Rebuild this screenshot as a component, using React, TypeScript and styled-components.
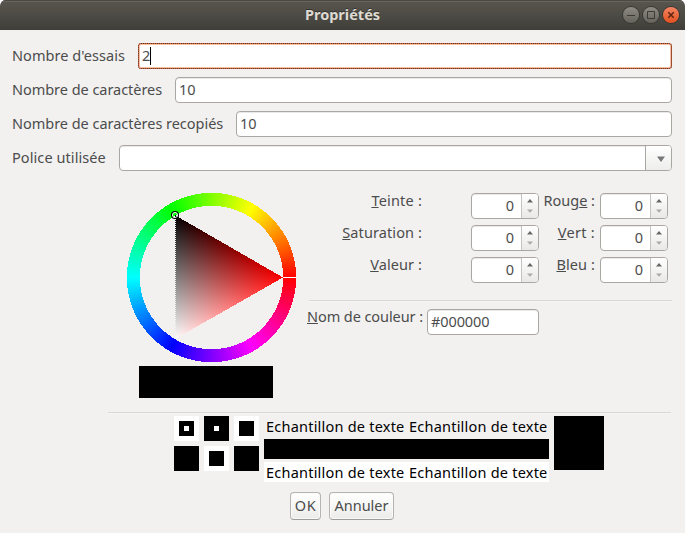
import React from 'react';
import styled, { createGlobalStyle, css } from 'styled-components';

const ink = '#4c4c4c';
const surface = '#f2f1f0';
const line = '#aaa7a3';

const GlobalStyle = createGlobalStyle`
  * { box-sizing: border-box; }
  body {
    margin: 0;
    background: #fff;
    color: ${ink};
    font-family: 'Noto Sans', 'Open Sans', sans-serif;
    font-size: 14.5px;
    line-height: 20px;
  }
`;

const Window = styled.div`
  width: 685px;
  height: 533px;
  display: flex;
  flex-direction: column;
  background: ${surface};
  border-radius: 6px 6px 0 0;
  overflow: hidden;
  white-space: nowrap;
`;

const TitleBar = styled.header`
  height: 30px;
  flex: none;
  display: grid;
  grid-template-columns: 1fr auto 1fr;
  align-items: center;
  padding: 0 6px;
  background: linear-gradient(#59564e, #4d4b45 50%, #3f3e39);
  box-shadow: inset 0 1px #4b4943, inset 0 2px #66635a;
`;

const Title = styled.h1`
  grid-column: 2;
  margin: 0;
  padding-bottom: 2px;
  font-size: 14.5px;
  font-weight: 700;
  line-height: 20px;
  color: #dfdbd2;
  text-shadow: 0 -1px #33322e;
`;

const WindowButtons = styled.div`
  display: flex;
  justify-content: flex-end;
  gap: 4px;
`;

const WindowButton = styled.button<{ $close?: boolean }>`
  width: 16px;
  height: 16px;
  padding: 0;
  border: 0;
  border-radius: 50%;
  display: flex;
  background: ${(p) => (p.$close ? 'linear-gradient(#f58562, #e2501f)' : 'linear-gradient(#8d8b83, #64625b)')};
  box-shadow: 0 0 0 1px #383733;
`;

const Form = styled.form`
  display: flex;
  flex-direction: column;
  gap: 8px;
  padding: 13px 13px 0 12px;
`;

const Field = styled.div<{ $label: number }>`
  display: grid;
  grid-template-columns: ${(p) => p.$label}px 1fr;
  align-items: center;
  height: 26px;
`;

const Text = styled.span<{ $track?: number }>`
  padding-bottom: 2px;
  letter-spacing: ${(p) => p.$track ?? 0}px;
`;

const Entry = styled.div<{ $focused?: boolean; $width?: number }>`
  display: flex;
  align-items: center;
  width: ${(p) => (p.$width ? `${p.$width}px` : 'auto')};
  height: 26px;
  padding: 0 3px;
  background: #fff;
  border: 1px solid ${line};
  border-radius: 4px;
  box-shadow: inset 0 1px #ebe9e7;
  overflow: hidden;
  ${(p) =>
    p.$focused &&
    css`
      border-color: #e9602f;
      border-radius: 3px;
      outline: 1px dotted #4a3a34;
      outline-offset: -1px;
      box-shadow: inset 0 0 0 1px #f8c0a4;
    `}
`;

const Caret = styled.span`
  width: 1px;
  height: 18px;
  background: #000;
`;

const Combo = styled(Entry)`
  padding: 0;
  justify-content: flex-end;
`;

const ComboButton = styled.button`
  width: 26px;
  height: 24px;
  padding: 2px 0 0 4px;
  border: 0;
  border-left: 1px solid ${line};
  display: flex;
  align-items: center;
  justify-content: center;
  background: linear-gradient(#fff, #ededec);
`;

const Picker = styled.section`
  display: flex;
  gap: 11px;
  height: 241px;
  padding: 22px 13px 0 127px;
`;

const WheelColumn = styled.div`
  display: flex;
  flex-direction: column;
  gap: 4px;
`;

const Wheel = styled.div`
  position: relative;
  width: 169px;
  height: 169px;
`;

const HueRing = styled.div`
  width: 169px;
  height: 169px;
  background: conic-gradient(from 90deg, #f00, #f0f, #00f, #0ff, #0f0, #ff0, #f00);
  mask-image: radial-gradient(circle at center, transparent 71.6px, #000 71.6px, #000 84.6px, transparent 84.6px);
`;

const Triangle = styled.svg`
  position: absolute;
  inset: 0;
  isolation: isolate;

  .screen { mix-blend-mode: screen; }
`;

const CurrentColor = styled.div`
  width: 134px;
  height: 32px;
  margin-left: 12px;
  background: #000;
`;

const Channels = styled.div`
  flex: 1;
`;

const ChannelGrid = styled.div`
  display: grid;
  grid-template-columns: 164px 68px 61px 68px;
  grid-auto-rows: 26px;
  row-gap: 6px;
`;

const ChannelLabel = styled.label<{ $track?: number; $gap?: number }>`
  text-align: right;
  line-height: 15px;
  padding-right: ${(p) => p.$gap ?? 0}px;
  letter-spacing: ${(p) => p.$track ?? 0}px;
`;

const Mnemonic = styled.span`
  text-decoration: underline 1px;
  text-underline-offset: 1px;
  text-decoration-skip-ink: none;
`;

const Spinner = styled(Entry)`
  padding: 0;

  output { flex: 1; padding: 0 7px 2px 0; text-align: right; }
`;

const Stepper = styled.span`
  width: 17px;
  height: 24px;
  display: flex;
  border-left: 1px solid #c5c2bf;
  background: linear-gradient(#fff, #e9e8e7);
`;

const Rule = styled.hr<{ $inset: number }>`
  flex: none;
  height: 1px;
  margin: 0 0 0 ${(p) => p.$inset}px;
  border: 0;
  background: #d9d8d6;
  box-shadow: 0 1px #f6f5f4;
`;

const ChannelRule = styled(Rule)`
  margin-top: 17px;
  margin-bottom: 8px;
`;

const PreviewRule = styled(Rule)`
  margin-right: 14px;
`;

const ColorName = styled.div`
  display: grid;
  grid-template-columns: 115px 112px;
  column-gap: 5px;
`;

const Preview = styled.section`
  display: flex;
  gap: 5px;
  padding: 3px 0 0 174px;
`;

const Tiles = styled.div`
  display: grid;
  grid-template-columns: repeat(3, 25px);
  grid-auto-rows: 25px;
  gap: 5px;
`;

const Square = styled.div<{ $size: number; $dark?: boolean }>`
  width: ${(p) => p.$size}px;
  height: ${(p) => p.$size}px;
  display: grid;
  place-items: center;
  background: ${(p) => (p.$dark ? '#000' : '#fff')};
`;

const Samples = styled.div`
  width: 285px;
  display: grid;
  grid-template-columns: 285px;
  grid-auto-rows: 20px;
  row-gap: 3px;
  color: #000;
`;

const SampleRow = styled.div<{ $fill: string }>`
  display: grid;
  grid-template-columns: 143px 140px;
  padding-left: 2px;
  letter-spacing: 0.22px;
  background: ${(p) => p.$fill};
`;

const Block = styled.div`
  width: 50px;
  height: 54px;
  background: #000;
`;

const Actions = styled.footer`
  display: flex;
  gap: 8px;
  padding: 10px 0 0 290px;
`;

const Button = styled.button<{ $width: number; $track?: number }>`
  width: ${(p) => p.$width}px;
  height: 28px;
  padding: 0 0 2px;
  font: inherit;
  color: ${ink};
  letter-spacing: ${(p) => p.$track ?? 0}px;
  border: 1px solid #b6b3b0;
  border-bottom-color: #9f9c98;
  border-radius: 4px;
  background: linear-gradient(#fff, #f6f6f5 50%, #ebebea);
  box-shadow: inset 0 0 0 1px #fafafa;
`;

function Steps() {
  return (
    <Stepper>
      <svg width="16" height="24" viewBox="0 0 16 24">
        <path d="M5 8.5h6L8 5Z" fill="#666" />
        <path d="M5 15.5h6l-3 3.3Z" fill="#aaa" />
      </svg>
    </Stepper>
  );
}

function Spin() {
  return (
    <Spinner>
      <output>0</output>
      <Steps />
    </Spinner>
  );
}

function ColorWheel() {
  const corners = '156,84.5 48,22.2 48,146';
  return (
    <Wheel>
      <HueRing />
      <Triangle width="169" height="169" viewBox="0 0 169 169">
        <defs>
          <linearGradient id="red" gradientUnits="userSpaceOnUse" x1="48" y1="22.2" x2="102" y2="115.7">
            <stop stopColor="#000" />
            <stop offset="1" stopColor="#f00" />
          </linearGradient>
          <linearGradient id="cyan" gradientUnits="userSpaceOnUse" x1="102" y1="53.3" x2="48" y2="146.8">
            <stop stopColor="#000" />
            <stop offset="1" stopColor="#0ff" />
          </linearGradient>
        </defs>
        <g shapeRendering="crispEdges">
          <polygon points={corners} fill="url(#red)" />
          <polygon points={corners} fill="url(#cyan)" className="screen" />
          <path d="M48.5 26V146" stroke={surface} strokeDasharray="1 1" />
          <path d="M156 84.5h13" stroke="#fff" />
        </g>
        <circle cx="48" cy="22" r="2.6" fill="none" stroke="#fff" />
        <circle cx="48" cy="22" r="3.5" fill="none" stroke="#000" strokeWidth="1.1" />
      </Triangle>
    </Wheel>
  );
}

export default function App() {
  return (
    <>
      <GlobalStyle />
      <Window>
        <TitleBar>
          <Title>Propriétés</Title>
          <WindowButtons>
            <WindowButton aria-label="Réduire">
              <svg width="16" height="16" stroke="#3b3a36"><path d="M4 8.5h8" /></svg>
            </WindowButton>
            <WindowButton aria-label="Agrandir">
              <svg width="16" height="16" stroke="#3b3a36" fill="none"><path d="M4.5 4.5h7v7h-7Z" /></svg>
            </WindowButton>
            <WindowButton $close aria-label="Fermer">
              <svg width="16" height="16" stroke="#5a2513" strokeWidth="1.5"><path d="m5.3 5.3 5.4 5.4m0-5.4-5.4 5.4" /></svg>
            </WindowButton>
          </WindowButtons>
        </TitleBar>

        <Form>
          <Field $label={126}>
            <Text $track={0.06}>Nombre d'essais</Text>
            <Entry $focused><Text>2</Text><Caret /></Entry>
          </Field>
          <Field $label={163}>
            <Text $track={-0.04}>Nombre de caractères</Text>
            <Entry><Text>10</Text></Entry>
          </Field>
          <Field $label={224}>
            <Text $track={-0.03}>Nombre de caractères recopiés</Text>
            <Entry><Text>10</Text></Entry>
          </Field>
          <Field $label={107}>
            <Text $track={0.08}>Police utilisée</Text>
            <Combo>
              <ComboButton type="button" aria-label="Police">
                <svg width="8" height="6"><path d="M0 .5h8L4 6Z" fill="#777" /></svg>
              </ComboButton>
            </Combo>
          </Field>
        </Form>

        <Picker>
          <WheelColumn>
            <ColorWheel />
            <CurrentColor />
          </WheelColumn>
          <Channels>
            <ChannelGrid>
              <ChannelLabel $gap={49} $track={0.2}><Mnemonic>T</Mnemonic>einte :</ChannelLabel>
              <Spin />
              <ChannelLabel $gap={5}>Roug<Mnemonic>e</Mnemonic> :</ChannelLabel>
              <Spin />
              <ChannelLabel $gap={49} $track={0.1}><Mnemonic>S</Mnemonic>aturation :</ChannelLabel>
              <Spin />
              <ChannelLabel $gap={5} $track={0.3}><Mnemonic>V</Mnemonic>ert :</ChannelLabel>
              <Spin />
              <ChannelLabel $gap={49} $track={0.1}><Mnemonic>V</Mnemonic>aleur :</ChannelLabel>
              <Spin />
              <ChannelLabel $gap={5} $track={0.1}><Mnemonic>B</Mnemonic>leu :</ChannelLabel>
              <Spin />
            </ChannelGrid>
            <ChannelRule $inset={2} />
            <ColorName>
              <ChannelLabel $track={-0.08}><Mnemonic>N</Mnemonic>om de couleur :</ChannelLabel>
              <Entry $width={112}><Text $track={-0.1}>#000000</Text></Entry>
            </ColorName>
          </Channels>
        </Picker>

        <PreviewRule $inset={108} />
        <Preview>
          <Tiles>
            <Square $size={25}><Square $size={15} $dark><Square $size={5} /></Square></Square>
            <Square $size={25} $dark><Square $size={5} /></Square>
            <Square $size={25}><Square $size={15} $dark /></Square>
            <Square $size={25} $dark />
            <Square $size={25}><Square $size={15} $dark /></Square>
            <Square $size={25} $dark />
          </Tiles>
          <Samples>
            <SampleRow $fill="transparent"><span>Echantillon de texte</span><span>Echantillon de texte</span></SampleRow>
            <SampleRow $fill="#000" />
            <SampleRow $fill="#fff"><span>Echantillon de texte</span><span>Echantillon de texte</span></SampleRow>
          </Samples>
          <Block />
        </Preview>

        <Actions>
          <Button $width={31} $track={0.5}>OK</Button>
          <Button $width={65}>Annuler</Button>
        </Actions>
      </Window>
    </>
  );
}
